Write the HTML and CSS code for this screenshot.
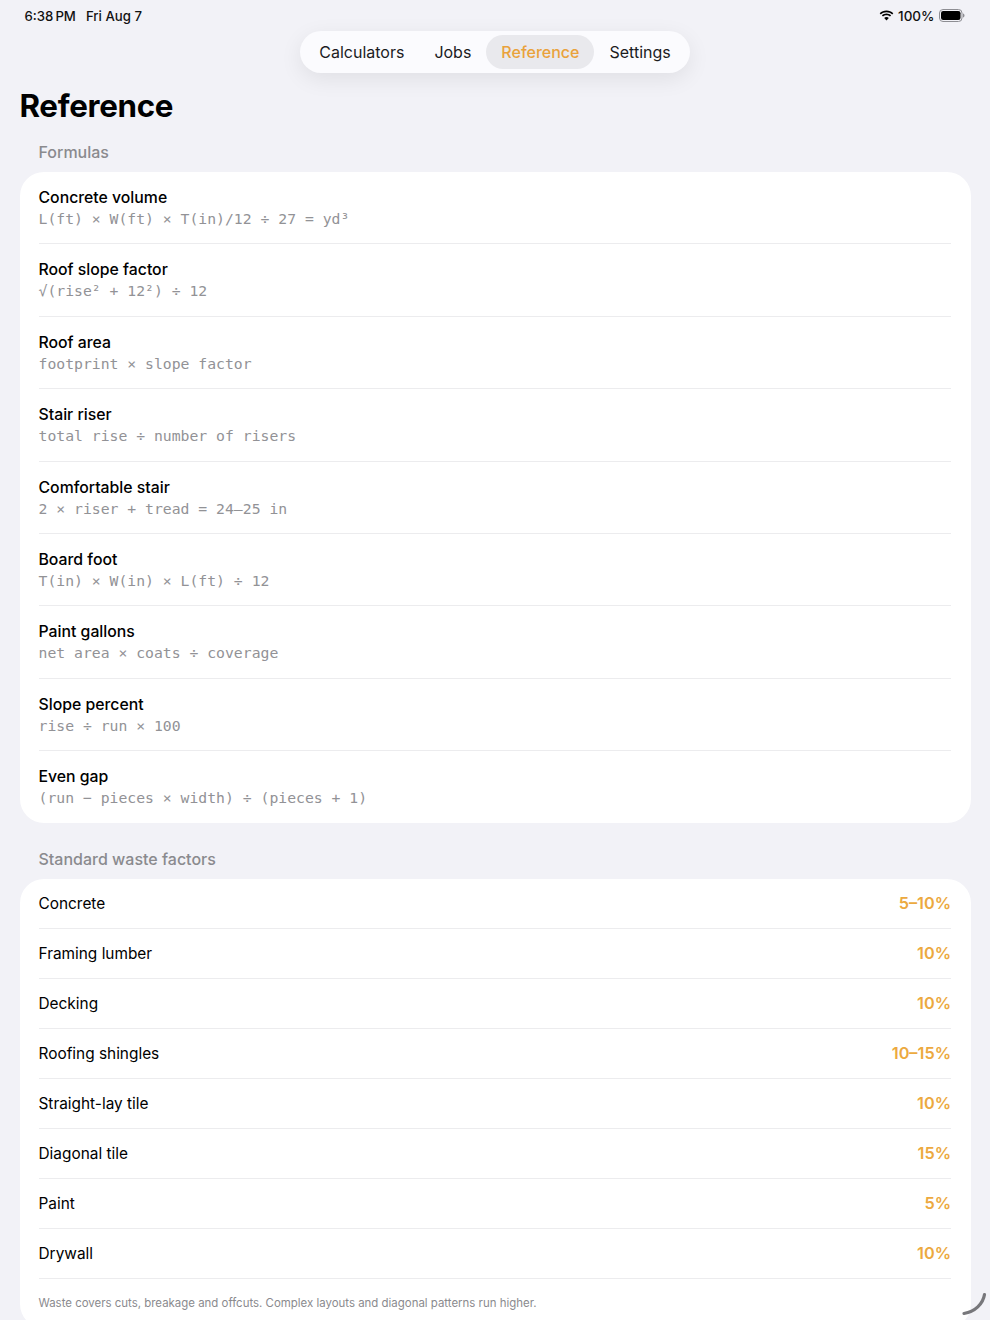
FILE: index.html
```html
<!DOCTYPE html>
<html lang="en">
<head>
    <meta charset="UTF-8">
    <meta name="viewport" content="width=device-width, initial-scale=1.0">
    <title>Reference</title>
    <link rel="stylesheet" href="styles.css">
</head>
<body>
    <div class="status-bar">
        <div class="status-time">
            <span class="clock">6:38 PM</span>
            <span>Fri Aug 7</span>
        </div>
        <div class="status-icons">
            <svg class="wifi" width="15" height="11" viewBox="0 0 15 11">
                <path d="M7.5 2.2c2.2 0 4.2.8 5.7 2.2l1.1-1.2C12.5 1.5 10.100.5 7.500.5S2.500 1.500.7 3.200l1.100 1.200C3.300 3 5.300 2.200 7.500 2.200z" fill="#000"/>
                <path d="M7.500 5.300c1.300 0 2.500.5 3.500 1.300l1.100-1.200c-1.200-1.100-2.900-1.800-4.600-1.800s-3.400.7-4.600 1.800L4 6.600c1-.8 2.200-1.300 3.500-1.300z" fill="#000"/>
                <path d="M7.500 7c-.9 0-1.700.3-2.300.9l2.300 2.600 2.300-2.600C9.200 7.300 8.400 7 7.500 7z" fill="#000"/>
            </svg>
            <span>100%</span>
            <svg class="battery" width="26" height="13" viewBox="0 0 26 13">
                <rect x="0.5" y="0.5" width="22.500" height="12" rx="3.500" fill="none" stroke="#8e8e93"/>
                <rect x="2" y="2" width="19.500" height="9" rx="2.200" fill="#000"/>
                <path d="M24 4.500c.9.300 1.500 1.100 1.500 2s-.6 1.700-1.500 2z" fill="#8e8e93"/>
            </svg>
        </div>
    </div>

    <div class="tab-wrap">
        <nav class="tabs">
            <a class="tab">Calculators</a>
            <a class="tab">Jobs</a>
            <a class="tab active">Reference</a>
            <a class="tab">Settings</a>
        </nav>
    </div>

    <h1 class="page-title">Reference</h1>

    <h2 class="section-title">Formulas</h2>
    <div class="card">
        <div class="formula">
            <h3>Concrete volume</h3>
            <p>L(ft) × W(ft) × T(in)/12 ÷ 27 = yd³</p>
        </div>
        <div class="formula">
            <h3>Roof slope factor</h3>
            <p>√(rise² + 12²) ÷ 12</p>
        </div>
        <div class="formula">
            <h3>Roof area</h3>
            <p>footprint × slope factor</p>
        </div>
        <div class="formula">
            <h3>Stair riser</h3>
            <p>total rise ÷ number of risers</p>
        </div>
        <div class="formula">
            <h3>Comfortable stair</h3>
            <p>2 × riser + tread = 24–25 in</p>
        </div>
        <div class="formula">
            <h3>Board foot</h3>
            <p>T(in) × W(in) × L(ft) ÷ 12</p>
        </div>
        <div class="formula">
            <h3>Paint gallons</h3>
            <p>net area × coats ÷ coverage</p>
        </div>
        <div class="formula">
            <h3>Slope percent</h3>
            <p>rise ÷ run × 100</p>
        </div>
        <div class="formula">
            <h3>Even gap</h3>
            <p>(run − pieces × width) ÷ (pieces + 1)</p>
        </div>
    </div>

    <h2 class="section-title second">Standard waste factors</h2>
    <div class="card">
        <div class="waste"><span>Concrete</span><strong>5–10%</strong></div>
        <div class="waste"><span>Framing lumber</span><strong>10%</strong></div>
        <div class="waste"><span>Decking</span><strong>10%</strong></div>
        <div class="waste"><span>Roofing shingles</span><strong>10–15%</strong></div>
        <div class="waste"><span>Straight-lay tile</span><strong>10%</strong></div>
        <div class="waste"><span>Diagonal tile</span><strong>15%</strong></div>
        <div class="waste"><span>Paint</span><strong>5%</strong></div>
        <div class="waste"><span>Drywall</span><strong>10%</strong></div>
        <p class="note">Waste covers cuts, breakage and offcuts. Complex layouts and diagonal patterns run higher.</p>
    </div>

    <!-- window resize handle -->
    <svg class="resize-handle" width="26" height="26" viewBox="0 0 26 26">
        <path d="M23.500 3.500C22 13 14 20.500 3 22.500" fill="none" stroke="#77777b" stroke-width="3.200" stroke-linecap="round"/>
    </svg>
</body>
</html>
```

FILE: styles.css
```css
* {
    margin: 0;
    padding: 0;
    box-sizing: border-box;
    font-family: 'Inter', 'Noto Sans', sans-serif;
}

html, body {
    height: 1320px;
    overflow: hidden;
}

body {
    position: relative;
    background: #f2f2f7;
    color: #000;
    padding: 0 19.5px;
}

.status-bar {
    display: flex;
    justify-content: space-between;
    align-items: center;
    height: 31px;
    padding: 0 6px 0 5px;
    font-size: 13.200px;
    font-weight: 500;
    color: #111;
}

.status-time {
    display: flex;
    gap: 10px;
}

.clock {
    word-spacing: -1.500px;
}

.status-icons {
    display: flex;
    align-items: center;
    gap: 4px;
    font-size: 13.500px;
}

.tab-wrap {
    display: flex;
    justify-content: center;
}

.tabs {
    display: flex;
    align-items: center;
    height: 42px;
    padding: 0 4px;
    background: #fbfbfe;
    border-radius: 21px;
    box-shadow: 0 6px 22px rgba(0, 0, 0, 0.08);
}

.tab {
    display: block;
    height: 34px;
    line-height: 34px;
    padding: 0 15px;
    border-radius: 17px;
    font-size: 16px;
    font-weight: 400;
    color: #1c1c1e;
}

.tab.active {
    background: #e9e9ed;
    color: #e9a23b;
    font-weight: 500;
}

.page-title {
    margin-top: 12px;
    height: 43px;
    line-height: 43px;
    font-size: 31.300px;
    font-weight: 700;
    letter-spacing: -0.3px;
}

.section-title {
    height: 33px;
    margin-top: 11px;
    padding: 0 19px;
    line-height: 26px;
    font-size: 16px;
    font-weight: 500;
    color: #8a8a8e;
}

.section-title.second {
    margin-top: 23px;
}

.card {
    background: #fff;
    border-radius: 24px;
    padding: 0 19.500px 0 19px;
}

.formula {
    height: 72.375px;
    padding-top: 15px;
    border-bottom: 1px solid #ececee;
}

.formula:last-child {
    border-bottom: none;
}

.formula h3 {
    height: 21px;
    line-height: 21px;
    font-size: 15.800px;
    font-weight: 500;
}

.formula p {
    height: 20px;
    padding-top: 1px;
    line-height: 20px;
    font-family: 'DejaVu Sans Mono', 'Liberation Mono', monospace;
    font-size: 14.750px;
    color: #929296;
}

.waste {
    display: flex;
    justify-content: space-between;
    align-items: center;
    height: 50px;
    border-bottom: 1px solid #ececee;
    font-size: 15.400px;
    padding-bottom: 1px;
}

.waste strong {
    font-size: 16.300px;
    font-weight: 600;
    color: #eca93f;
}

.note {
    height: 49px;
    padding-top: 17px;
    font-size: 11.450px;
    line-height: 15px;
    color: #8a8a8e;
}

.resize-handle {
    position: absolute;
    right: 3px;
    bottom: 3px;
}
```
